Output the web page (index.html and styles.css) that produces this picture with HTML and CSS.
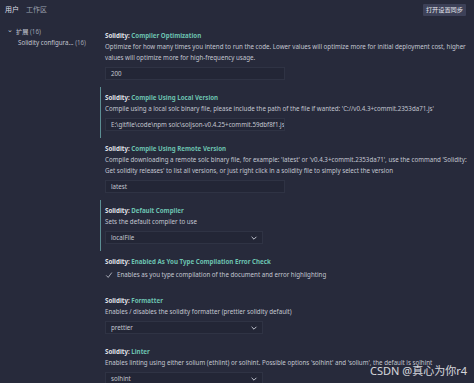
FILE: index.html
```html
<!DOCTYPE html>
<html>
<head>
<meta charset="utf-8">
<link rel="stylesheet" href="styles.css">
</head>
<body>
<div class="app">
  <div class="topbar">
    <div class="tabs">
      <span class="tab active">用户</span>
      <span class="tab">工作区</span>
    </div>
    <button class="sync">打开设置同步</button>
  </div>
  <div class="main">
    <div class="tree">
      <div class="node"><span class="chev">&#8964;</span>扩展 <span class="cnt">(16)</span></div>
      <div class="node child">Solidity configura... <span class="cnt">(16)</span></div>
    </div>
    <div class="settings">
      <div class="item">
        <div class="title"><b>Solidity: </b><span class="name">Compiler Optimization</span></div>
        <div class="desc">Optimize for how many times you intend to run the code. Lower values will optimize more for initial deployment cost, higher<br>values will optimize more for high-frequency usage.</div>
        <div class="input">200</div>
      </div>
      <div class="item focus">
        <div class="title"><b>Solidity: </b><span class="name">Compile Using Local Version</span></div>
        <div class="desc">Compile using a local solc binary file, please include the path of the file if wanted: 'C://v0.4.3+commit.2353da71.js'</div>
        <div class="input">E:\gitfile\code\npm solc\soljson-v0.4.25+commit.59dbf8f1.js</div>
      </div>
      <div class="item">
        <div class="title"><b>Solidity: </b><span class="name">Compile Using Remote Version</span></div>
        <div class="desc">Compile downloading a remote solc binary file, for example: 'latest' or 'v0.4.3+commit.2353da71', use the command 'Solidity:<br>Get solidity releases' to list all versions, or just right click in a solidity file to simply select the version</div>
        <div class="input">latest</div>
      </div>
      <div class="item focus">
        <div class="title"><b>Solidity: </b><span class="name">Default Compiler</span></div>
        <div class="desc">Sets the default compiler to use</div>
        <div class="select"><span>localFile</span><svg viewBox="0 0 10 10" class="arrow"><path d="M2 3.5 L5 6.5 L8 3.5" fill="none" stroke="#c8cbd6" stroke-width="1.2"/></svg></div>
      </div>
      <div class="item">
        <div class="title"><b>Solidity: </b><span class="name">Enabled As You Type Compilation Error Check</span></div>
        <div class="check"><svg viewBox="0 0 10 10" class="tick"><path d="M1.5 5.5 L4 8 L8.5 2" fill="none" stroke="#c8cbd6" stroke-width="1"/></svg><span>Enables as you type compilation of the document and error highlighting</span></div>
      </div>
      <div class="item">
        <div class="title"><b>Solidity: </b><span class="name">Formatter</span></div>
        <div class="desc">Enables / disables the solidity formatter (prettier solidity default)</div>
        <div class="select"><span>prettier</span><svg viewBox="0 0 10 10" class="arrow"><path d="M2 3.5 L5 6.5 L8 3.5" fill="none" stroke="#c8cbd6" stroke-width="1.2"/></svg></div>
      </div>
      <div class="item">
        <div class="title"><b>Solidity: </b><span class="name">Linter</span></div>
        <div class="desc">Enables linting using either solium (ethlint) or solhint. Possible options 'solhint' and 'solium', the default is solhint</div>
        <div class="select"><span>solhint</span><svg viewBox="0 0 10 10" class="arrow"><path d="M2 3.5 L5 6.5 L8 3.5" fill="none" stroke="#c8cbd6" stroke-width="1.2"/></svg></div>
      </div>
    </div>
  </div>
  <div class="watermark">CSDN @真心为你r4</div>
</div>
</body>
</html>
```
FILE: styles.css
```css
html, body {
  margin: 0;
  padding: 0;
  background: #272a3b;
  overflow: hidden;
}
.app {
  width: 474px;
  height: 383px;
  position: relative;
  font-family: "Noto Sans", "Noto Sans CJK SC", sans-serif;
  font-size: 6.2px;
  color: #c3c6d1;
  overflow: hidden;
}
.topbar {
  display: flex;
  justify-content: space-between;
  align-items: flex-start;
  height: 22px;
}
.tabs {
  display: flex;
  gap: 7px;
  padding: 4px 0 0 5px;
}
.tab {
  font-size: 7px;
  line-height: 12px;
  color: #9ea2b0;
}
.tab.active {
  color: #dcdee6;
}
.sync {
  margin: 4px 8px 0 0;
  background: #3d4158;
  color: #e6e7ee;
  border: none;
  font-family: inherit;
  font-size: 6.2px;
  line-height: 12px;
  padding: 0 3px;
  border-radius: 1px;
}
.main {
  display: flex;
}
.tree {
  width: 100px;
  flex: none;
  padding-top: 4px;
}
.node {
  line-height: 11px;
  padding-left: 7px;
  color: #c3c6d1;
  white-space: nowrap;
}
.node.child {
  padding-left: 18px;
}
.chev {
  display: inline-block;
  margin-right: 3px;
  font-size: 7px;
  position: relative;
  top: -2px;
}
.cnt {
  color: #9ea2b0;
}
.settings {
  flex: 1;
  padding-top: 3px;
}
.item {
  padding: 6px 0 7px 4px;
  border-left: 1px solid transparent;
}
.item.focus {
  border-left-color: #5c8f94;
}
.title {
  line-height: 10px;
  color: #e2e4ea;
  white-space: nowrap;
}
.title b {
  font-weight: 700;
}
.name {
  color: #6cc2b0;
  font-weight: 700;
}
.desc {
  line-height: 11px;
  white-space: nowrap;
}
.input {
  margin-top: 4px;
  height: 13px;
  line-height: 12px;
  width: 180px;
  background: #232636;
  border: 1px solid #2f3344;
  box-sizing: border-box;
  padding-left: 5px;
  color: #c3c6d1;
  white-space: nowrap;
  overflow: hidden;
}
.select {
  margin-top: 4px;
  height: 13px;
  width: 158px;
  background: #232636;
  border: 1px solid #2f3344;
  box-sizing: border-box;
  padding: 0 4px 0 5px;
  display: flex;
  justify-content: space-between;
  align-items: center;
}
.arrow {
  width: 8px;
  height: 8px;
}
.check {
  display: flex;
  align-items: center;
  gap: 4px;
  line-height: 12px;
  margin-top: 2px;
  padding-bottom: 2px;
}
.tick {
  width: 8px;
  height: 8px;
}
.watermark {
  position: absolute;
  right: 7px;
  bottom: 5px;
  font-family: "Noto Sans", "Noto Sans CJK SC", sans-serif;
  font-size: 11px;
  color: #e8e9ee;
  opacity: 0.9;
}
```
